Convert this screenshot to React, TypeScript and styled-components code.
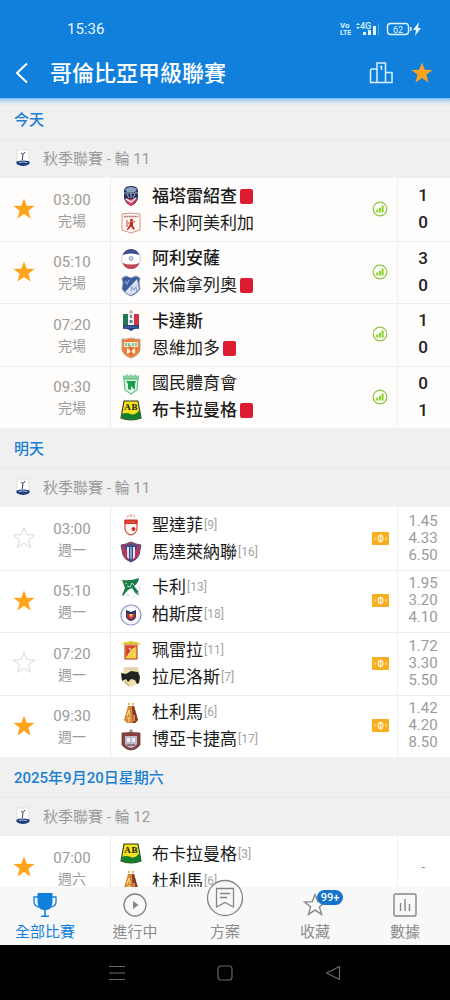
import React from 'react';
import styled, { createGlobalStyle } from 'styled-components';

const Global = createGlobalStyle`
  * { box-sizing: border-box; }
  body {
    margin: 0;
    background: #000;
    font-family: Roboto, "Noto Sans CJK TC", sans-serif;
    color: #1c1c1c;
  }
  button { font: inherit; color: inherit; background: none; border: 0; padding: 0; cursor: pointer; }
  svg { display: block; flex: none; }
`;

const Screen = styled.div`
  display: flex;
  flex-direction: column;
  height: 100vh;
  overflow: hidden;
`;

const Header = styled.header`
  position: relative;
  flex: none;
  padding-bottom: 10px;
  background: #1180dc;
  color: #fff;
  &::after {
    content: '';
    position: absolute;
    left: 0;
    right: 0;
    top: 100%;
    height: 9px;
    background: linear-gradient(#7cbdf3, #b9d9f3 30%, #e2eaf1 60%, rgba(240, 240, 240, 0));
  }
`;

const StatusBar = styled.div`
  display: flex;
  align-items: center;
  justify-content: space-between;
  height: 58px;
  padding: 0 28px 0 67px;
  font-size: 15px;
  color: #e6f6ff;
`;

const Toolbar = styled.div`
  display: flex;
  align-items: center;
  height: 30px;
  padding: 0 16px 0 10px;
`;

const IconButton = styled.button`
  display: grid;
  place-items: center;
  width: 24px;
  height: 30px;
`;

const Title = styled.h1`
  flex: 1;
  margin: 0 0 0 16px;
  padding-top: 2px;
  font-size: 22px;
  line-height: 28px;
  font-weight: 500;
  white-space: nowrap;
`;

const ToolbarActions = styled.div`
  display: flex;
  gap: 17px;
`;

const Feed = styled.main`
  flex: 1;
  min-height: 0;
  overflow: hidden;
  padding-top: 1px;
  background: #f0f0f0;
`;

const DateHeading = styled.h2`
  margin: 0;
  padding: 2px 14px 0;
  height: 40px;
  line-height: 38px;
  font-size: 15px;
  font-weight: 500;
  color: #1a7fd0;
`;

const RoundHeading = styled.h3`
  display: flex;
  align-items: center;
  gap: 13px;
  margin: 0;
  height: 39px;
  padding: 0 16px 3px;
  border-top: 1px solid #e9e9e9;
  font-size: 15px;
  font-weight: 400;
  color: #9b9b9b;
`;

const MatchList = styled.ul<{ $fullDay: boolean }>`
  display: grid;
  grid-auto-rows: minmax(62px, 1fr);
  min-height: ${p => (p.$fullDay ? '250px' : '62px')};
  margin: 0;
  padding: 0;
  list-style: none;
`;

const MatchRow = styled.li<{ $finished: boolean }>`
  display: grid;
  grid-template-columns: 48px 63px 1fr 34px 53px;
  align-items: center;
  background: ${p => (p.$finished ? '#fffdfb' : '#fff')};
  & + & { box-shadow: inset 0 1px #eeecec; }
`;

const StarButton = styled.button`
  display: grid;
  place-items: center;
  align-self: stretch;
`;

const Kickoff = styled.div`
  display: flex;
  flex-direction: column;
  align-self: stretch;
  align-items: center;
  justify-content: center;
  padding: 3px 14px 0 0;
  border-right: 1px solid #eeecec;
  font-size: 15px;
  line-height: 21px;
  color: #9b9b9b;
`;

const KickoffNote = styled.span`
  font-size: 14px;
`;

const Teams = styled.div`
  padding: 1px 0 0 9px;
`;

const Team = styled.div<{ $winner?: boolean }>`
  display: flex;
  align-items: center;
  height: 27px;
  font-size: 17px;
  line-height: 27px;
  font-weight: ${p => (p.$winner ? 500 : 400)};
  white-space: nowrap;
`;

const TeamName = styled.span`
  margin-left: 10px;
`;

const RedCard = styled.span`
  width: 13px;
  height: 15px;
  margin-left: 3px;
  border-radius: 2px;
  background: #dd1c31;
`;

const Rank = styled.span`
  margin-left: 1px;
  font-size: 12px;
  color: #a3a3a3;
`;

const InfoCell = styled.div`
  display: grid;
  justify-items: center;
`;

const ResultCell = styled.div<{ $odds?: boolean }>`
  display: flex;
  flex-direction: column;
  align-self: stretch;
  align-items: center;
  justify-content: center;
  padding-right: 2px;
  border-left: 1px solid #f2f0f0;
  font-size: ${p => (p.$odds ? '15px' : '17px')};
  line-height: ${p => (p.$odds ? '17px' : '27px')};
  font-weight: ${p => (p.$odds ? 400 : 500)};
  color: ${p => (p.$odds ? '#9b9b9b' : '#222')};
`;

const TabBar = styled.nav`
  position: relative;
  flex: none;
  display: grid;
  grid-template-columns: repeat(5, 1fr);
  background: #f8f8f8;
`;

const Tab = styled.button<{ $active?: boolean }>`
  display: flex;
  flex-direction: column;
  align-items: center;
  height: 58px;
  padding-top: 6px;
  font-size: 15px;
  line-height: 20px;
  color: ${p => (p.$active ? '#1180dc' : '#8c8c8c')};
`;

const TabIcon = styled.span`
  position: relative;
  display: flex;
  align-items: flex-end;
  height: 24px;
  margin-bottom: 5px;
`;

const Badge = styled.span`
  position: absolute;
  left: 14px;
  top: -3px;
  width: 26px;
  height: 15px;
  border-radius: 8px;
  background: #1674cc;
  color: #fff;
  font-size: 11px;
  line-height: 15px;
  font-weight: 500;
  text-align: center;
`;

const SystemBar = styled.div`
  flex: none;
  display: grid;
  grid-template-columns: repeat(3, 1fr);
  align-items: center;
  justify-items: center;
  height: 55px;
  padding: 0 14%;
  background: #000;
`;

const STAR = 'M12 1.5l2.8 7.2 7.7.3-6.1 4.8 2.2 7.6L12 17.1l-6.6 4.3 2.2-7.6L1.5 9l7.7-.3z';

const Star = ({ on }: { on: boolean }) => (
  <svg width="24" height="24" viewBox="0 0 24 24" aria-hidden="true">
    <path d={STAR} fill={on ? '#fda41c' : 'none'} stroke={on ? 'none' : '#dadada'} strokeWidth="1" />
  </svg>
);

const StatusIcons = () => (
  <svg width="82" height="16" viewBox="0 0 82 16" fill="#dff4ff" fontFamily="Roboto, sans-serif" aria-hidden="true">
    <text x="0" y="7" fontSize="8" fontWeight="700">Vo</text>
    <text x="0" y="14" fontSize="7" fontWeight="700">LTE</text>
    <path d="M16 4l2-2 2 2zM16 6l2 2 2-2z" />
    <text x="20" y="8" fontSize="9" fontWeight="500">4G</text>
    <rect x="23" y="11" width="3" height="3" />
    <rect x="28" y="9" width="3" height="5" />
    <rect x="33" y="5" width="3" height="9" />
    <rect x="38" y="2" width="1" height="12" opacity=".3" />
    <rect x="47.5" y="2.5" width="21" height="11" rx="3" fill="none" stroke="#dff4ff" strokeWidth="1.4" />
    <path d="M70 6h1.5v4H70z" />
    <text x="58" y="11.5" fontSize="9" textAnchor="middle">62</text>
    <path d="M79 1l-6 8h3l-1 6 6-8h-3z" />
  </svg>
);

const LeagueLogo = () => (
  <svg width="14" height="18" viewBox="0 0 14 18" aria-hidden="true">
    <path d="M1 1h12v13l-6 3-6-3z" fill="#fff" stroke="#dcdcd6" strokeWidth=".8" />
    <path d="M5 4l2 1.500L9 3M7 5.500L6.300 11" stroke="#33415a" strokeWidth="1" fill="none" />
    <path d="M.5 12.500q6.500-2 13 0v2.500q-6.500 4-13 0z" fill="#1d3d7a" />
    <path d="M3 13.500q4-1 8 0" stroke="#b9cbe6" strokeWidth=".9" fill="none" />
  </svg>
);

const StatsIcon = () => (
  <svg width="16" height="16" viewBox="0 0 16 16" aria-label="統計" role="img">
    <circle cx="8" cy="8" r="6.8" fill="#fbfff2" stroke="#8fc04c" strokeWidth="1.2" />
    <path d="M4.200 8.500h1.900v3H4.200zM6.900 6.800h2v4.700h-2zM9.600 4.500h2v7h-2z" fill="#8bcf2d" />
  </svg>
);

const OddsIcon = () => (
  <svg width="17" height="13" viewBox="0 0 17 13" aria-label="賠率" role="img">
    <rect width="17" height="13" rx="1" fill="#f8ae1e" />
    <ellipse cx="8.5" cy="6.5" rx="2.3" ry="3" fill="none" stroke="#fff3cf" strokeWidth="1.3" />
    <path d="M8.500 2.500v8M3 5.500v2M14 5.500v2" stroke="#fff3cf" strokeWidth="1.1" />
  </svg>
);

const SHIELD = 'M2 2q4 1 9-1 5 2 9 1v11q-1 5-9 8-8-3-9-8z';

const crests: Record<string, React.ReactNode> = {
  fortaleza: (
    <>
      <path d="M4 6q0-5 7-5t7 5v7q-1 5-7 8-6-3-7-8z" fill="#26345f" />
      <path d="M5 4q6-4 12 0l-2 3H7z" fill="#8fa0be" />
      <path d="M4 8h14M7 9l2 4M15 9l-2 4M11 8v5" stroke="#c9d3e6" strokeWidth=".8" />
      <path d="M5 13q6 3 12-1-1 6-6 9-5-3-6-8z" fill="#e2385a" />
      <path d="M6 14l5 3 5-4" stroke="#f4e8f0" strokeWidth="1.5" fill="none" />
    </>
  ),
  america: (
    <>
      <path d="M2 2q9-2 18 0v16l-9 3-9-3z" fill="#fff8f4" stroke="#c98a7e" strokeWidth=".9" />
      <path d="M4 4.500h14" stroke="#b56a64" strokeWidth="1.3" strokeDasharray="2 .6" />
      <circle cx="11.5" cy="8.2" r="1.4" fill="#c22b22" />
      <path d="M10 9.500h3v4l2 4h-2l-2-3-3 3.500H6.500l3-5z" fill="#c22b22" />
      <path d="M13 10.500l2-1.500M9.500 11H8M7 8v7" stroke="#c22b22" strokeWidth=".9" fill="none" />
    </>
  ),
  alianza: (
    <>
      <circle cx="11" cy="11" r="9.5" fill="#fff" stroke="#b7b9cf" strokeWidth=".8" />
      <path d="M2.500 7Q5 1 11 1t8.500 6q-8-3-17 0z" fill="#3c4d8c" />
      <path d="M2.500 15Q5 21 11 21t8.500-6q-8 3-17 0z" fill="#bf4856" />
      <circle cx="11" cy="10.5" r="1.8" fill="#e3e8f3" stroke="#6c7cab" strokeWidth=".9" />
    </>
  ),
  millonarios: (
    <>
      <path d="M2 3l4-2 5 2 5-2 4 2-1 5 1 6q-3 5-9 7-6-2-9-7l1-6z" fill="#3c5c9e" stroke="#8c99b5" />
      <path d="M17 4L5 17q2 2 6 3 5-2 8-6l-1-6z" fill="#dbe2ef" />
      <path d="M5 6l2 3 2-4M11 16l1-4 2 3 2-3 1 4" stroke="#8fa5cf" fill="none" strokeWidth="1.2" />
    </>
  ),
  cadiz: (
    <>
      <path d="M11 0v4M9 2h4" stroke="#ab9d8a" />
      <path d="M3 4h5v11H3z" fill="#247554" />
      <path d="M8 4h6v11H8z" fill="#f4f4f2" />
      <path d="M14 4h5v11h-5z" fill="#cd3546" />
      <path d="M10 5h2v3h-2zM9.500 10h3v3h-3z" fill="#71839d" />
      <path d="M3 15h16v4q-4-1-8 2-4-3-8-2z" fill="#24447f" />
      <path d="M5 17h12" stroke="#6f8dc0" strokeDasharray="1.5 1" />
    </>
  ),
  envigado: (
    <>
      <path d={SHIELD} fill="#ef7d35" stroke="#b8a795" />
      <path d="M4 5h14v5H4z" fill="#e9efdd" />
      <path d="M6 6v3M9 6v3h2M13 6v3M16 6v3" stroke="#5c9b62" strokeWidth="1.2" fill="none" />
      <path d="M7 11l4 3 4-3v6l-4-2-4 2z" fill="#fff2df" />
      <path d="M11 10v8" stroke="#d85a25" strokeWidth="1.3" />
    </>
  ),
  nacional: (
    <>
      <path d="M3 2l2 1 2-2 2 2 2-2 2 2 2-2 2 2 2-1v4H3z" fill="#86cf9e" />
      <path d="M4 6h14l-1 11-6 4-6-4z" fill="#e2f5e8" stroke="#6dc48b" strokeWidth="1.3" />
      <path d="M6 8h10l-1 3v6l-4-4v4l-3-1V11z" fill="#1f9b50" />
    </>
  ),
  bucaramanga: (
    <>
      <path d="M4 1h14l3 17q-10 4-20 0z" fill="#f5e11c" stroke="#27371e" strokeWidth="1.1" />
      <path d="M1.500 14q5-2 9 0t9-4l1.500 8q-10 4-20 0z" fill="#177d2e" />
      <text x="7.5" y="10" textAnchor="middle" fontFamily="Liberation Serif, serif" fontWeight="700" fontSize="9" fill="#1a1a12">A</text>
      <text x="14.5" y="10" textAnchor="middle" fontFamily="Liberation Serif, serif" fontWeight="700" fontSize="9" fill="#1a1a12">B</text>
    </>
  ),
  santafe: (
    <>
      <path d="M7 4l1-3 2 2 1-3 1 3 2-2 1 3" fill="none" stroke="#eab4a0" />
      <path d="M5 6h12v9q-1 5-6 6-5-1-6-6z" fill="#fff6f3" stroke="#d2392c" strokeWidth="1.1" />
      <path d="M4.500 6h13v4h-13z" fill="#d73427" />
      <path d="M7 8h8" stroke="#eea49a" strokeWidth=".8" strokeDasharray="1.5 .8" />
      <circle cx="13.5" cy="15" r="2" fill="#cf2e23" />
    </>
  ),
  magdalena: (
    <>
      <path d="M1 4l5-1 5-2 5 2 5 1-2 10q-2 5-8 7-6-2-8-7z" fill="#c53250" stroke="#4c5486" />
      <path d="M4 5l7-2 7 2-2 4H6z" fill="#31518f" />
      <path d="M7 6h2v12l-2-2zM13 6h2v10l-2 2z" fill="#dfe6f4" />
      <path d="M9 6h4v13l-2 1-2-1z" fill="#2e4f95" />
      <path d="M11 6v12" stroke="#dfe6f4" />
    </>
  ),
  cali: (
    <>
      <path d="M2 3q9 1 17-2-1 6-5 8l4 5 1 4-3-1-4-6-4 2-5 6-1-1 3-7z" fill="#1b7d49" />
      <path d="M5 7l2-1M7 9l3 1 2-4 2 2" stroke="#bfe2cb" strokeWidth="1" fill="none" />
      <circle cx="8" cy="18" r="1.3" fill="#d4e8db" />
      <path d="M20 8q0 9-8 13" stroke="#d9e0dc" fill="none" />
    </>
  ),
  pasto: (
    <>
      <circle cx="11" cy="11" r="10" fill="#fff" stroke="#8d96c6" strokeWidth="1.2" />
      <circle cx="11" cy="11" r="8" fill="none" stroke="#c9cde5" strokeDasharray="1 1" />
      <path d="M6 6l5 2 5-2v7q-1 3-5 4-4-1-5-4z" fill="#263366" />
      <path d="M7 9l4 2 4-2v4l-4 3-4-3z" fill="#cf2e3f" />
      <path d="M9 10h4l-2 4z" fill="#f1c646" />
    </>
  ),
  pereira: (
    <>
      <path d="M1 6q3-4 7-3 3-2 6 0 4-1 7 3l-4-1H5z" fill="#e5c927" />
      <path d="M5 6h12v14H5z" fill="#f4d03b" stroke="#b3392a" strokeWidth="1.1" />
      <path d="M6 7h10L6 18z" fill="#d84131" />
      <path d="M8 16l6-7M9 9l2 2M14 14v3" stroke="#fff0b0" strokeWidth="1.1" />
    </>
  ),
  llaneros: (
    <>
      <path d="M4 1h14l2 7-2 9-7 4-6-4-2-9z" fill="#ece0a6" />
      <path d="M5 2h12v2H5z" fill="#e2c9bd" />
      <path d="M1 7l5 1 5-3 7 1 2 5-1 6-2 1-2-4-4-1-3 3-2-3-4 2z" fill="#21231f" />
      <path d="M4 15l5 5" stroke="#c2b066" strokeWidth="1.2" />
    </>
  ),
  tolima: (
    <>
      <path d="M8 2h2M12 2h2" stroke="#e6b452" strokeWidth="2" />
      <path d="M8 4h6l4 14-3 3H7l-3-3z" fill="#d48731" />
      <path d="M12 4h2l4 14-3 3h-2z" fill="#8d3426" />
      <path d="M7 14l2-6 1 6M7 16h4M9 16v4M14 13v6" stroke="#f5d888" strokeWidth="1.1" fill="none" />
    </>
  ),
  chico: (
    <>
      <path d="M11 0v4M9 2h4" stroke="#8c7570" />
      <path d="M2 4q9-1 18 0v12q-4 5-9 5t-9-5z" fill="#8a4240" stroke="#673735" strokeWidth=".8" />
      <path d="M5 7h12v8q-3 4-6 4t-6-4z" fill="#b8bccb" />
      <path d="M7 9h3v4H7zM12 9h3v4h-3z" fill="#f0f0f4" />
      <path d="M7 16h8" stroke="#774c58" strokeWidth="1.3" />
    </>
  ),
};

const Crest = ({ id }: { id: string }) => (
  <svg width="22" height="22" viewBox="0 0 22 22" aria-hidden="true">{crests[id]}</svg>
);

type Side = { crest: string; name: string; winner?: boolean; red?: boolean; rank?: string };
type Match = { star: boolean; time: string; note: string; sides: Side[]; score?: string[]; odds?: string[] };
type Day = { date: string; round: string; matches: Match[] };

const days: Day[] = [
  {
    date: '今天',
    round: '秋季聯賽 - 輪 11',
    matches: [
      { star: true, time: '03:00', note: '完場', score: ['1', '0'], sides: [{ crest: 'fortaleza', name: '福塔雷紹查', winner: true, red: true }, { crest: 'america', name: '卡利阿美利加' }] },
      { star: true, time: '05:10', note: '完場', score: ['3', '0'], sides: [{ crest: 'alianza', name: '阿利安薩', winner: true }, { crest: 'millonarios', name: '米倫拿列奧', red: true }] },
      { star: false, time: '07:20', note: '完場', score: ['1', '0'], sides: [{ crest: 'cadiz', name: '卡達斯', winner: true }, { crest: 'envigado', name: '恩維加多', red: true }] },
      { star: false, time: '09:30', note: '完場', score: ['0', '1'], sides: [{ crest: 'nacional', name: '國民體育會' }, { crest: 'bucaramanga', name: '布卡拉曼格', winner: true, red: true }] },
    ],
  },
  {
    date: '明天',
    round: '秋季聯賽 - 輪 11',
    matches: [
      { star: false, time: '03:00', note: '週一', odds: ['1.45', '4.33', '6.50'], sides: [{ crest: 'santafe', name: '聖達菲', rank: '9' }, { crest: 'magdalena', name: '馬達萊納聯', rank: '16' }] },
      { star: true, time: '05:10', note: '週一', odds: ['1.95', '3.20', '4.10'], sides: [{ crest: 'cali', name: '卡利', rank: '13' }, { crest: 'pasto', name: '柏斯度', rank: '18' }] },
      { star: false, time: '07:20', note: '週一', odds: ['1.72', '3.30', '5.50'], sides: [{ crest: 'pereira', name: '珮雷拉', rank: '11' }, { crest: 'llaneros', name: '拉尼洛斯', rank: '7' }] },
      { star: true, time: '09:30', note: '週一', odds: ['1.42', '4.20', '8.50'], sides: [{ crest: 'tolima', name: '杜利馬', rank: '6' }, { crest: 'chico', name: '博亞卡捷高', rank: '17' }] },
    ],
  },
  {
    date: '2025年9月20日星期六',
    round: '秋季聯賽 - 輪 12',
    matches: [
      { star: true, time: '07:00', note: '週六', sides: [{ crest: 'bucaramanga', name: '布卡拉曼格', rank: '3' }, { crest: 'tolima', name: '杜利馬', rank: '6' }] },
    ],
  },
];

const MatchItem = ({ match }: { match: Match }) => {
  const finished = !!match.score;
  // Finished matches without a bookmark leave the star slot empty.
  const showStar = match.star || !finished;
  return (
    <MatchRow $finished={finished}>
      {showStar ? (
        <StarButton aria-label="收藏" aria-pressed={match.star}><Star on={match.star} /></StarButton>
      ) : (
        <span />
      )}
      <Kickoff>
        <time>{match.time}</time>
        <KickoffNote>{match.note}</KickoffNote>
      </Kickoff>
      <Teams>
        {match.sides.map(side => (
          <Team key={side.name} $winner={side.winner}>
            <Crest id={side.crest} />
            <TeamName>{side.name}</TeamName>
            {side.red && <RedCard />}
            {side.rank && <Rank>[{side.rank}]</Rank>}
          </Team>
        ))}
      </Teams>
      <InfoCell>
        {match.score && <StatsIcon />}
        {match.odds && <OddsIcon />}
      </InfoCell>
      <ResultCell $odds={!finished}>
        {(match.score ?? match.odds ?? ['-']).map((value, i) => <span key={i}>{value}</span>)}
      </ResultCell>
    </MatchRow>
  );
};

export default function App() {
  return (
    <Screen>
      <Global />
      <Header>
        <StatusBar>
          <span>15:36</span>
          <StatusIcons />
        </StatusBar>
        <Toolbar>
          <IconButton aria-label="返回">
            <svg width="20" height="24" viewBox="0 0 20 24" fill="none" stroke="#fff" strokeWidth="2">
              <path d="M15 2.500L5 12l10 9.500" />
            </svg>
          </IconButton>
          <Title>哥倫比亞甲級聯賽</Title>
          <ToolbarActions>
            <IconButton aria-label="積分榜">
              <svg width="24" height="24" viewBox="0 0 24 24" fill="none" stroke="#d8f0ff" strokeWidth="1.5">
                <path d="M8 21.500V2h8.500v19.500M8 8H2.500L1.500 9v12.500h21.500V11.500h-6.500M11 5.500h1.500V9" />
              </svg>
            </IconButton>
            <IconButton aria-label="收藏聯賽"><Star on /></IconButton>
          </ToolbarActions>
        </Toolbar>
      </Header>

      <Feed>
        {days.map(day => (
          <section key={day.date}>
            <DateHeading>{day.date}</DateHeading>
            <RoundHeading><LeagueLogo />{day.round}</RoundHeading>
            <MatchList $fullDay={day.matches.length > 1}>
              {day.matches.map(m => <MatchItem key={m.time} match={m} />)}
            </MatchList>
          </section>
        ))}
      </Feed>

      <TabBar>
        <Tab $active aria-current="page">
          <TabIcon>
            <svg width="24" height="24" viewBox="0 0 24 24" fill="#1180dc">
              <path d="M4.500 0h15v9q-.5 7-5.500 8h-4q-5-1-5.500-8zM11.200 16h1.600v7h-1.600zM8 22.500h8V24H8z" />
              <path d="M5 4H1v5q0 4 5 5M19 4h4v5q0 4-5 5" fill="none" stroke="#1180dc" strokeWidth="1.3" />
            </svg>
          </TabIcon>
          全部比賽
        </Tab>
        <Tab>
          <TabIcon>
            <svg width="24" height="24" viewBox="0 0 24 24" fill="none" stroke="#858585" strokeWidth="1.3">
              <circle cx="12" cy="12" r="11" />
              <path d="M10 8l5.500 4-5.500 4z" fill="#858585" stroke="none" />
            </svg>
          </TabIcon>
          進行中
        </Tab>
        <Tab>
          <TabIcon>
            <svg width="38" height="38" viewBox="0 0 38 38" fill="none" stroke="#858585" strokeWidth="1.3">
              <circle cx="19" cy="19" r="17.5" fill="#f8f8f8" />
              <path d="M10.500 9.500h17V28L19 23.500 10.500 28zM14 14.500h10M14 18.500h7" />
            </svg>
          </TabIcon>
          方案
        </Tab>
        <Tab>
          <TabIcon>
            <svg width="24" height="24" viewBox="0 0 24 24" fill="none" stroke="#858585" strokeWidth="1.3">
              <path d={STAR} />
            </svg>
            <Badge>99+</Badge>
          </TabIcon>
          收藏
        </Tab>
        <Tab>
          <TabIcon>
            <svg width="24" height="24" viewBox="0 0 24 24" fill="none" stroke="#858585" strokeWidth="1.4">
              <rect x="1" y="1" width="22" height="22" rx="1.5" />
              <path d="M7.500 10v8M12 6v12M16.500 11v7" />
            </svg>
          </TabIcon>
          數據
        </Tab>
      </TabBar>

      <SystemBar>
        <svg width="16" height="16" viewBox="0 0 16 16" stroke="#686868" strokeWidth="1.2">
          <path d="M0 1.500h16M0 8h16M0 14.500h16" />
        </svg>
        <svg width="16" height="16" viewBox="0 0 16 16" fill="none" stroke="#686868" strokeWidth="1.2">
          <rect x="1" y="1" width="14" height="14" rx="3" />
        </svg>
        <svg width="16" height="16" viewBox="0 0 16 16" fill="none" stroke="#686868" strokeWidth="1.2" strokeLinejoin="round">
          <path d="M14.500 1.500v13L1.500 8z" />
        </svg>
      </SystemBar>
    </Screen>
  );
}
